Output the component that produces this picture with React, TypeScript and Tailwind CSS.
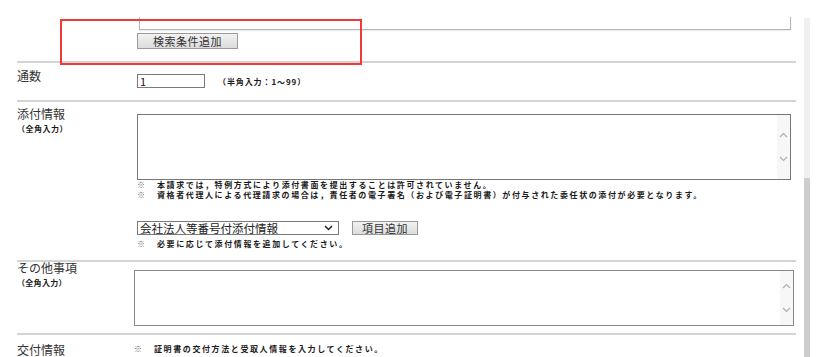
import React from "react";

const ScrollArrows = () => (
  <div className="absolute right-0 top-0 bottom-0 w-[13px] bg-[#f7f7f7] flex flex-col items-center justify-center gap-[18px]">
    <svg width="9" height="6" viewBox="0 0 9 6">
      <path d="M1 5 L4.5 1.5 L8 5" fill="none" stroke="#b0b0b0" strokeWidth="1.2" />
    </svg>
    <svg width="9" height="6" viewBox="0 0 9 6">
      <path d="M1 1 L4.5 4.5 L8 1" fill="none" stroke="#b0b0b0" strokeWidth="1.2" />
    </svg>
  </div>
);

const Note: React.FC<{ children: React.ReactNode }> = ({ children }) => (
  <div className="flex text-[8px] leading-[10px] text-[#1a1a1a] font-semibold">
    <span className="w-[20px] text-[#666] font-normal">※</span>
    <span className="tracking-[1.6px] whitespace-nowrap">{children}</span>
  </div>
);

const Divider = () => <div className="h-[2px] bg-[#d4d4d4]" />;

const App: React.FC = () => {
  return (
    <div className="relative w-[834px] h-[357px] overflow-hidden bg-white flex font-['Noto_Sans_CJK_JP',sans-serif] text-[#333]">
      {/* page content */}
      <div className="w-[804px] pl-[17px] pr-[8px] flex flex-col">
        {/* end of previous row */}
        <div className="h-[62px] flex">
          <div className="w-[120px]" />
          <div className="flex flex-col">
            <div className="ml-[2px] mt-[17px] h-[13px] w-[652px] border-x border-b border-[#b5b5b5] shadow-[0_1px_1px_rgba(0,0,0,0.08)]" />
            <button className="mt-[3px] w-[101px] h-[16px] border border-[#9a9a9a] bg-gradient-to-b from-[#f2f2f2] to-[#dcdcdc] text-[11px] leading-[14px] tracking-[0.5px] text-[#333]">
              検索条件追加
            </button>
          </div>
        </div>
        <Divider />

        {/* 通数 */}
        <div className="flex">
          <div className="w-[120px] pt-[6px] text-[12px] leading-[14px]">通数</div>
          <div className="pt-[11px] pb-[12px] flex items-center">
            <div className="w-[68px] h-[14px] border border-[#7a7a7a] text-[11px] leading-[12px] pl-[2px] text-[#111]">1</div>
            <span className="ml-[13px] mt-[1px] text-[8px] tracking-[0.9px] font-semibold text-[#1a1a1a]">（半角入力：1〜99）</span>
          </div>
        </div>
        <Divider />

        {/* 添付情報 */}
        <div className="flex">
          <div className="w-[120px] pt-[3px] flex flex-col">
            <span className="text-[12px] leading-[18px]">添付情報</span>
            <span className="text-[8px] leading-[12px] tracking-[0.5px] font-semibold text-[#1a1a1a]">（全角入力）</span>
          </div>
          <div className="pt-[12px] pb-[11px] flex flex-col">
            <div className="relative w-[654px] h-[66px] border border-[#777]">
              <ScrollArrows />
            </div>
            <Note>本請求では，特例方式により添付書面を提出することは許可されていません。</Note>
            <Note>資格者代理人による代理請求の場合は，責任者の電子署名（および電子証明書）が付与された委任状の添付が必要となります。</Note>
            <div className="mt-[21px] flex items-center">
              <div className="w-[202px] h-[14px] border border-[#7a7a7a] flex items-center justify-between pl-[2px] pr-[5px]">
                <span className="text-[11.5px] leading-[12px] text-[#222]">会社法人等番号付添付情報</span>
                <svg width="9" height="6" viewBox="0 0 9 6">
                  <path d="M1 1 L4.5 4.5 L8 1" fill="none" stroke="#222" strokeWidth="1.5" />
                </svg>
              </div>
              <button className="ml-[13px] w-[66px] h-[14px] border border-[#9a9a9a] bg-gradient-to-b from-[#f2f2f2] to-[#dcdcdc] text-[11px] leading-[12px] tracking-[0.5px] text-[#333]">
                項目追加
              </button>
            </div>
            <div className="mt-[4px]">
              <Note>必要に応じて添付情報を追加してください。</Note>
            </div>
          </div>
        </div>
        <Divider />

        {/* その他事項 */}
        <div className="flex">
          <div className="w-[120px] -mt-[3px] flex flex-col">
            <span className="text-[12px] leading-[18px]">その他事項</span>
            <span className="text-[8px] leading-[12px] tracking-[0.3px] font-semibold text-[#1a1a1a]">（全角入力）</span>
          </div>
          <div className="pt-[8px] pb-[7px] -ml-[3px]">
            <div className="relative w-[660px] h-[56px] border border-[#888]">
              <ScrollArrows />
            </div>
          </div>
        </div>
        <Divider />

        {/* 交付情報 */}
        <div className="flex">
          <div className="w-[120px] pt-[8px] text-[12px] leading-[14px]">交付情報</div>
          <div className="pt-[9px] -ml-[3px]">
            <Note>証明書の交付方法と受取人情報を入力してください。</Note>
          </div>
        </div>
      </div>

      {/* page scrollbar */}
      <div className="w-[6px] pt-[18px] flex flex-col">
        <div className="h-[160px] bg-[#f0f0f0]" />
        <div className="flex-1 bg-[#cdcdcd]" />
      </div>

      {/* red annotation frame */}
      <div className="absolute left-[60px] top-[19px] w-[302px] h-[46px] border-2 border-[#ee3a3a]" />
    </div>
  );
};

export default App;
